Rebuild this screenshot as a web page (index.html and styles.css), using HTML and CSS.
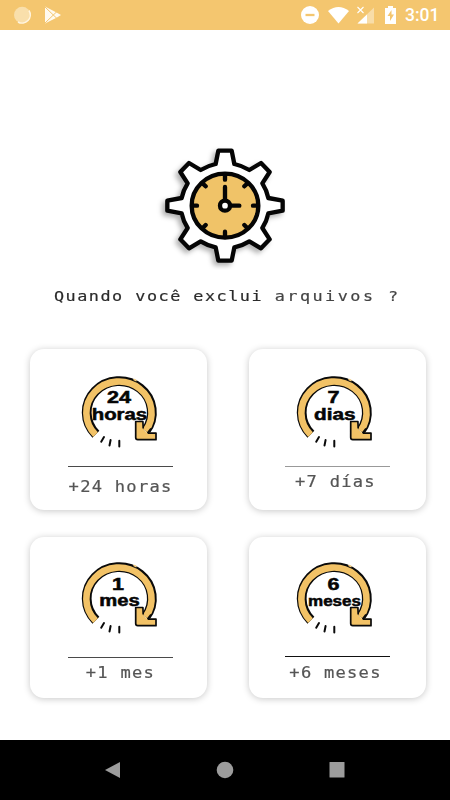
FILE: index.html
```html
<!DOCTYPE html>
<html lang="pt-br">
<head>
  <meta charset="UTF-8" />
  <meta name="viewport" content="width=device-width, initial-scale=1.0" />
  <title>Excluir arquivos</title>
  <link rel="stylesheet" href="styles.css">
</head>
<body>
  <header class="statusbar">
    <svg class="notifications" width="50" height="20" viewBox="0 0 50 20">
      <circle cx="10.2" cy="10" r="8.2" fill="#f9dfab" />
      <path d="M17 5.500A8.200 8.200 0 0 1 6 17" fill="none" stroke="#fff5e0" stroke-width="1.500" />
      <path d="M33 1.500L44.500 7.500L49 10L44.500 12.700L33 18.500Z" fill="#fffaf0" />
      <path d="M33 2L45.500 14M33 18L45.500 6" stroke="#f4c66f" stroke-width="1" />
    </svg>
    <div class="system">
      <svg width="98" height="20" viewBox="0 0 98 20">
        <circle cx="10" cy="10" r="9" fill="#fff" />
        <path d="M5.500 10H14.500" stroke="#f4c66f" stroke-width="2.300" />
        <path d="M28 6Q38.500-2 49 6L38.500 18.500Z" fill="#fff" />
        <path d="M57.500 18.500L74 2.500V18.500Z" fill="#fff" opacity=".4" />
        <path d="M57.500 18.500L67 9.500V18.500Z" fill="#fff" />
        <path d="M57.500 2L63.500 8M63.500 2L57.500 8" stroke="#fff" stroke-width="1.100" />
        <path d="M85 3H88V1H93V3H96V19H85Z" fill="#fff" />
        <path d="M91.500 5L87.500 11H90V16L94 9.500H91.500Z" fill="#f4c66f" />
      </svg>
      <span class="hour">3:01</span>
    </div>
  </header>

  <main class="main">
    <svg class="gear" width="140" height="130" viewBox="0 0 420 390">
      <path class="gear-body" d="M190 32H230L238 72Q262 77 283 90L318 69L344 96L322 130Q335 150 340 174L383 182V212L340 220Q335 244 322 264L344 298L318 325L283 304Q262 317 238 322L230 362H190L182 322Q158 317 137 304L102 325L76 298L98 264Q85 244 80 220L37 212V182L80 174Q85 150 98 130L76 96L102 69L137 90Q158 77 182 72Z" />
      <ellipse class="clock" cx="210" cy="197" rx="100" ry="96" />
      <path class="marks" d="M210 103V119M210 275V291M114 197H126M294 197H306M144 131L152 139M276 131L268 139M144 263L152 255M276 263L268 255" />
      <path class="hands" d="M210 141V180M226 197H253" />
      <circle class="pin" cx="210" cy="197" r="15" />
    </svg>

    <h1 class="question">Quando você exclui <span>arquivos ?</span></h1>

    <!-- forma comum dos ícones -->
    <svg width="0" height="0" class="defs">
      <symbol id="ciclo" viewBox="0 0 90 80">
        <path d="M20.900 64.200A32.600 31.300 0 1 1 70.500 61" fill="none" stroke="#0a0a0a" stroke-width="9.800" />
        <path d="M20.500 64.600A32.600 31.300 0 1 1 70.500 61" fill="none" stroke="#f2c266" stroke-width="6.600" />
        <path d="M58.500 9.300L61.500 10.700" stroke="#f4cd82" stroke-width="1.600" />
        <path d="M60.700 51.700H67.700L68.200 59.500L72 62.800H81V69.500H62.500Q60.700 69.500 60.700 67.500Z" fill="#f2c266" />
        <path d="M72.500 63.100H81V69.700H62.800Q60.700 69.500 60.700 67.500V51.500H67.900L68.200 58.500M72.500 63.100L76 58.500" fill="none" stroke="#0a0a0a" stroke-width="1.700" stroke-linejoin="round" />
        <path d="M29 67L26.200 71.700M35.600 70L34.500 75.500M44.300 70.700V76.500" stroke="#0a0a0a" stroke-width="2" stroke-linecap="round" />
      </symbol>
    </svg>

    <div class="grid">
      <div class="card">
        <svg class="icon" width="90" height="80" viewBox="0 0 90 80">
          <use href="#ciclo" />
          <text x="32" y="33.300" textLength="24" lengthAdjust="spacingAndGlyphs">24</text>
          <text x="16.700" y="49.500" textLength="55.500" lengthAdjust="spacingAndGlyphs">horas</text>
        </svg>
        <div class="line"></div>
        <p class="label low">+24 horas</p>
      </div>
      <div class="card right">
        <svg class="icon" width="90" height="80" viewBox="0 0 90 80">
          <use href="#ciclo" />
          <text x="37.500" y="33.300" textLength="12" lengthAdjust="spacingAndGlyphs">7</text>
          <text x="24" y="49.500" textLength="41.500" lengthAdjust="spacingAndGlyphs">dias</text>
        </svg>
        <div class="line soft"></div>
        <p class="label">+7 días</p>
      </div>
      <div class="card bottom">
        <svg class="icon" width="90" height="80" viewBox="0 0 90 80">
          <use href="#ciclo" />
          <text x="37" y="33.600" textLength="12" lengthAdjust="spacingAndGlyphs">1</text>
          <text x="24.200" y="49.800" textLength="40.500" lengthAdjust="spacingAndGlyphs">mes</text>
        </svg>
        <div class="line"></div>
        <p class="label">+1 mes</p>
      </div>
      <div class="card right bottom">
        <svg class="icon" width="90" height="80" viewBox="0 0 90 80">
          <use href="#ciclo" />
          <text x="37.400" y="33.600" textLength="12" lengthAdjust="spacingAndGlyphs">6</text>
          <text class="small" x="18" y="49.900" textLength="53" lengthAdjust="spacingAndGlyphs">meses</text>
        </svg>
        <div class="line strong"></div>
        <p class="label">+6 meses</p>
      </div>
    </div>
  </main>

  <nav class="navbar">
    <svg width="16" height="18" viewBox="0 0 16 18"><path d="M0 9L15 1V17Z" /></svg>
    <svg width="18" height="18" viewBox="0 0 18 18"><circle cx="9" cy="9" r="8.300" /></svg>
    <svg width="16" height="18" viewBox="0 0 16 18"><rect x=".5" y="1" width="15" height="15.500" rx=".5" /></svg>
  </nav>
</body>
</html>
```
FILE: styles.css
```css
:root {
  --amarelo: #f4c66f;
}
* { box-sizing: border-box; margin: 0; padding: 0; }
body { width: 450px; height: 800px; display: flex; flex-direction: column; overflow: hidden; background: #fff; font-family: "DejaVu Sans Mono", monospace; }
svg { display: block; flex: none; }

.statusbar { height: 30px; display: flex; justify-content: space-between; align-items: center; padding: 0 10px 0 12px; background: var(--amarelo); }
.system { display: flex; align-items: center; gap: 7px; }
.hour { font: 500 17.5px/32px Roboto, sans-serif; color: #fff; width: 35px; white-space: nowrap; }

.main { flex: 1; display: flex; flex-direction: column; align-items: center; padding-top: 110px; }
.gear-body { fill: #fff; stroke: #050505; stroke-width: 13; stroke-linejoin: round; filter: drop-shadow(-9px 9px 8px rgba(0, 0, 0, .3)); }
.clock { fill: #f0c368; stroke: #050505; stroke-width: 13; }
.marks, .hands { fill: none; stroke: #050505; stroke-width: 13; stroke-linecap: round; }
.pin { fill: #fff; stroke: #050505; stroke-width: 13; }

.question { margin-top: 14px; height: 24px; align-self: flex-start; margin-left: 53.5px; font-size: 14.5px; line-height: 24px; font-weight: normal; letter-spacing: 1.3px; color: #2b2b2b; -webkit-text-stroke: .2px; white-space: pre; transform: scaleX(1.158); transform-origin: left; }
.question span { letter-spacing: 2.15px; color: #444; }
.defs { position: absolute; }

.grid { display: grid; grid-template-columns: 177px 177px; grid-auto-rows: 161px; gap: 27px 42px; margin: 41px 0 0 6px; }
.card { display: flex; flex-direction: column; align-items: center; padding-top: 21px; border-radius: 14px; background: #fff; box-shadow: 0 1px 7px rgba(0, 0, 0, .22); }
.icon { margin-left: 3px; }
.icon text { font: bold 15.6px "Liberation Sans", Arial, sans-serif; fill: #050505; stroke: #050505; stroke-width: .5; }
.icon .small { font-size: 14.5px; }
.line { width: 105px; height: 1px; margin: 16px 0 0 4px; background: #4a4a4a; }
.label { height: 20px; margin: 5px 0 0 4px; font-size: 15px; line-height: 20px; letter-spacing: 1.1px; color: #555; -webkit-text-stroke: .2px; white-space: nowrap; transform: scaleX(1.14); }
.low { margin-top: 10px; margin-left: 5px; }
.right .icon { margin-left: -6px; }
.right .line { margin-left: 0; }
.right .label { margin-left: -4px; }
.soft { background: #999; }
.strong { background: #111; }
.bottom { padding-top: 19px; }
.bottom .line { margin-top: 21px; }
.bottom .strong { margin-top: 20px; }
.bottom .strong + .label { margin-top: 6px; }

.navbar { height: 60px; display: flex; align-items: center; justify-content: space-between; padding: 0 105px; background: #000; }
.navbar svg { fill: #9c9c9c; }
```
